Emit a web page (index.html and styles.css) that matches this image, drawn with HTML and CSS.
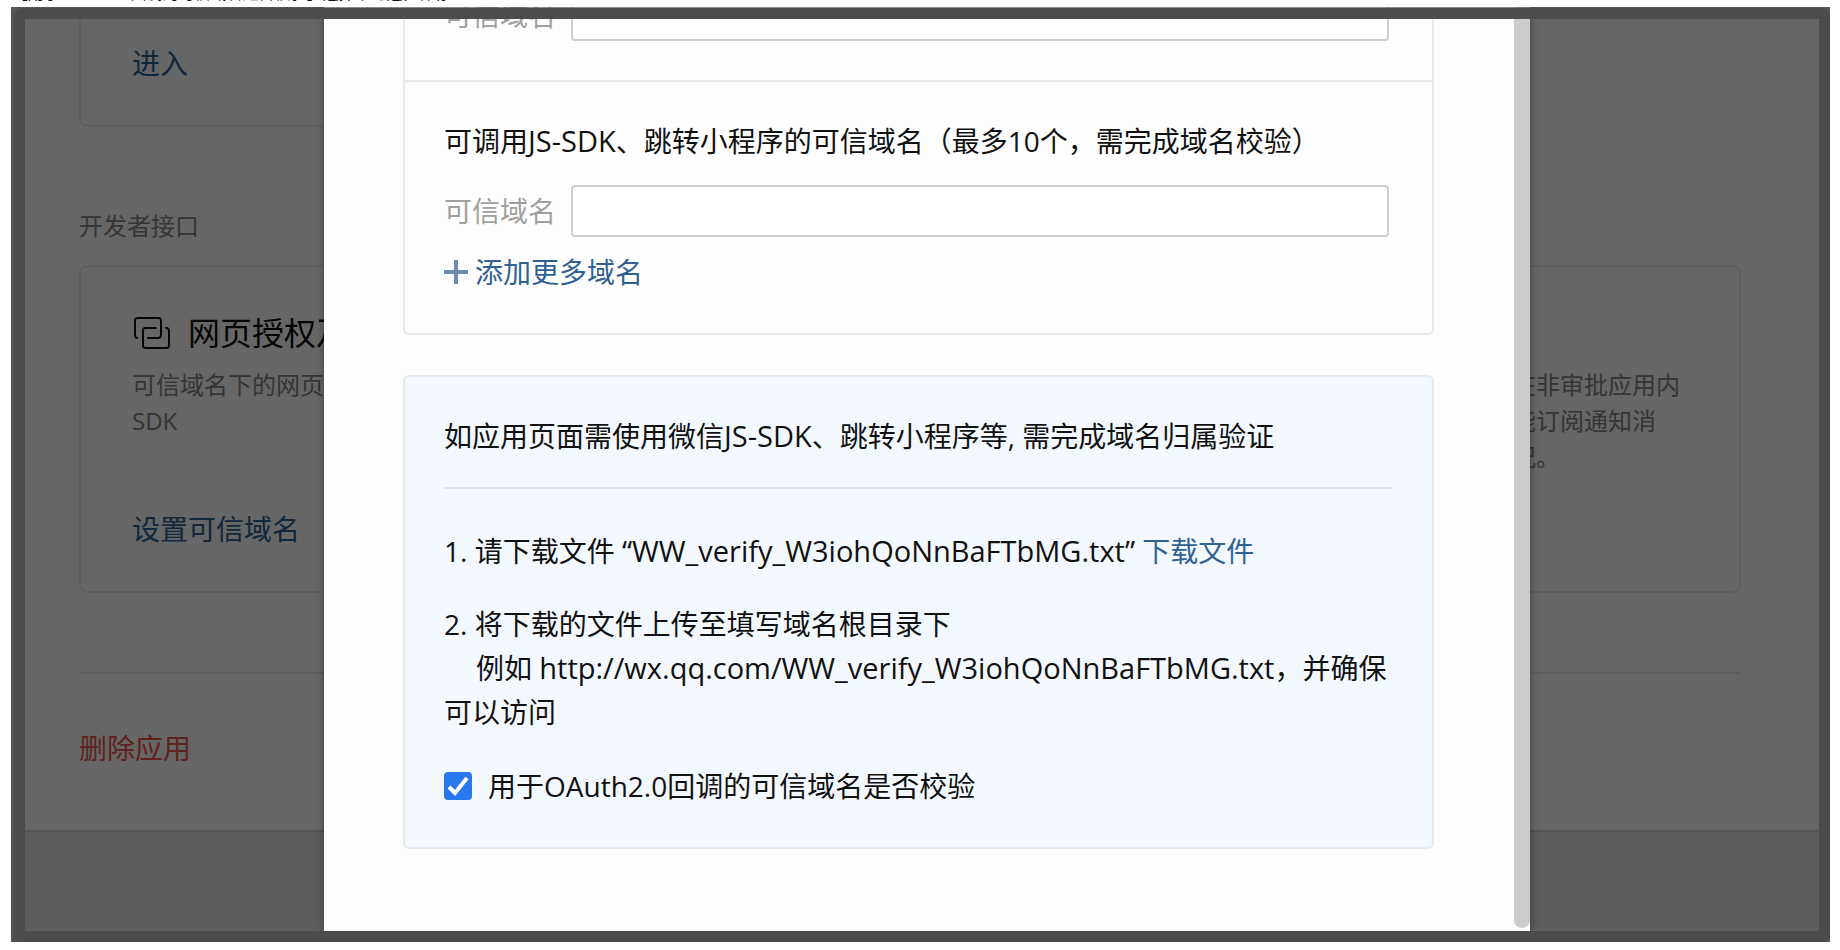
FILE: index.html
```
<!DOCTYPE html>
<html lang="zh-CN">
<head>
<meta charset="utf-8">
<title>可信域名</title>
<link rel="stylesheet" href="styles.css">
</head>
<body>
<p class="caption">【用于OAuth2.0回调的可信域名是否校验】选择不勾选，保存</p>
<div class="shot">
  <div class="page">
    <main class="page-main">
      <div class="cards">
        <section class="card card-enter"><a class="link" href="#">进入</a></section>
      </div>
      <h2 class="group-title">开发者接口</h2>
      <div class="cards">
        <section class="card">
          <h3 class="card-title">
            <svg class="card-icon" viewBox="0 0 40 34" fill="none" stroke="currentColor" stroke-width="2" stroke-linecap="round" stroke-linejoin="round"><path d="M5 22Q3 22 3 19V4Q3 2 6 2H27Q29 2 29 5V19Q29 22 26 22H16"/><path d="M24 12H13Q11 12 11 15V30Q11 32 14 32H35Q37 32 37 29V15Q37 12 34 12"/></svg>
            网页授权及JS-SDK
          </h3>
          <p class="card-desc">可信域名下的网页可使用JS-<br>SDK</p>
          <a class="link" href="#">设置可信域名</a>
        </section>
        <section class="card"></section>
        <section class="card">
          <h3 class="card-title">审批接口</h3>
          <p class="card-desc">调用审批接口后即可以在非审批应用内<br>使用企业微信审批的功能订阅通知消<br>息，及时了解审批的状况。</p>
        </section>
      </div>
      <hr class="page-rule">
      <button class="delete" type="button">删除应用</button>
    </main>
    <footer class="page-foot"></footer>
  </div>
  <div class="mask"></div>
  <div class="dialog" role="dialog" aria-label="可信域名">
    <div class="dialog-body">
      <div class="box">
        <section class="box-part part-first">
          <div class="field"><label for="d1">可信域名</label><input id="d1" type="text"></div>
        </section>
        <section class="box-part">
          <p class="text">可调用<span class="latin">JS-SDK</span>、跳转小程序的可信域名（最多10个，需完成域名校验）</p>
          <div class="field field-second"><label for="d2">可信域名</label><input id="d2" type="text"></div>
          <button class="add" type="button">
            <svg class="plus" viewBox="0 0 24 24" stroke="currentColor" stroke-width="4"><path d="M12 0V24M0 12H24"/></svg>添加更多域名
          </button>
        </section>
      </div>
      <section class="box box-blue">
        <p class="text">如应用页面需使用微信<span class="latin">JS-SDK</span>、跳转小程序等, 需完成域名归属验证</p>
        <hr class="box-rule">
        <p class="text">1. 请下载文件 <span class="latin">“WW_verify_W3iohQoNnBaFTbMG.txt”</span> <a class="link" href="#">下载文件</a></p>
        <p class="text step">2. 将下载的文件上传至填写域名根目录下<br><span class="indent">例如 <span class="latin">http://wx.qq.com/WW_verify_W3iohQoNnBaFTbMG.txt</span>，并确保</span>可以访问</p>
        <label class="check"><input type="checkbox" checked><svg class="tick" viewBox="0 0 28 28" fill="none" stroke="#fff" stroke-width="4"><path d="M5 15L11 21L23 6"/></svg>用于OAuth2.0回调的可信域名是否校验</label>
      </section>
    </div>
    <div class="scroll"></div>
  </div>
  <div class="frame"></div>
</div>
</body>
</html>
```
FILE: styles.css
```
* { box-sizing: border-box; }
body {
  margin: 0;
  height: 100vh;
  display: flex;
  flex-direction: column;
  background: #fff;
  color: #111;
  font: 28px/44px "Open Sans", "Noto Sans CJK SC", sans-serif;
  overflow: hidden;
}
h2, h3, p { margin: 0; font-weight: 400; }
button { padding: 0; border: 0; background: none; font: inherit; cursor: pointer; }
.link { color: #2f6193; text-decoration: none; }
.latin { font-size: 29px; line-height: 1; }

.caption {
  flex: none;
  height: 7px;
  padding: 0 0 4px 12px;
  overflow: hidden;
  display: flex;
  align-items: flex-end;
  font-size: 16px;
  line-height: 20px;
  white-space: nowrap;
}
.shot {
  flex: 1;
  min-height: 0;
  position: relative;
  margin: 0 10px 8px 11px;
  overflow: hidden;
}

.page {
  height: 100%;
  display: flex;
  flex-direction: column;
  justify-content: flex-end;
  background: #fff;
}
.page-main { flex: none; padding: 0 89px 64px 68px; line-height: 36px; }
.page-foot {
  flex: none;
  height: 112px;
  background: #e8e8e8;
  border-top: 2px solid #d2d2d2;
}
.card { border: 2px solid #e8e8e8; border-radius: 8px; padding: 44px 51px; }
.card-enter { padding-top: 80px; }
.card-enter .link { display: block; }
.group-title { margin: 81px 0 21px; font-size: 24px; color: #858585; }
.cards { display: grid; grid-template-columns: repeat(3, minmax(0, 1fr)); gap: 48px; }
.card-title {
  display: flex;
  align-items: center;
  gap: 16px;
  font-size: 32px;
  line-height: 44px;
  white-space: nowrap;
}
.card-icon { width: 40px; height: 34px; }
.card-desc {
  min-height: 108px;
  margin: 12px 0 36px;
  font-size: 24px;
  color: #858585;
  white-space: nowrap;
}
.page-rule { margin: 79px 0 56px; border: 0; border-top: 2px solid #e8e8e8; }
.delete { display: block; color: #f0554c; }

.mask { position: absolute; inset: 0; background: rgba(0, 0, 0, .6); }

.dialog {
  position: absolute;
  top: 0;
  bottom: 11px;
  left: 313px;
  right: 300px;
  display: flex;
  background: #fdfdfd;
  box-shadow: 0 0 8px rgba(0, 0, 0, .4);
}
.dialog-body {
  flex: 1;
  min-width: 0;
  display: flex;
  flex-direction: column;
  justify-content: flex-end;
  gap: 40px;
  padding: 0 80px 82px 79px;
  overflow: hidden;
}
.scroll { width: 16px; margin-bottom: 3px; background: #cbcbcb; border-radius: 0 0 8px 8px; }

.box { flex: none; border: 2px solid #e6eaed; border-radius: 6px; }
.box-part { padding: 37px 43px 39px 39px; }
.box-part + .box-part { border-top: 2px solid #e6eaed; }
.part-first { padding-bottom: 39px; }
.box-blue { padding: 37px 39px 39px; background: #f3f8fe; }
.box-blue .text { white-space: nowrap; }
.field { display: flex; align-items: center; gap: 15px; color: #a0a0a0; }
.field label { flex: none; }
.field input {
  flex: 1;
  min-width: 0;
  height: 52px;
  padding: 0 12px;
  border: 2px solid #cfcfcf;
  border-radius: 4px;
  background: #fff;
  font: inherit;
}
.field-second { margin: 22px 0 13px; }
.add { display: flex; align-items: center; gap: 7px; color: #2f6193; }
.plus { width: 24px; height: 24px; color: #6f8bad; }
.box-rule { margin: 29px 0 40px; border: 0; border-top: 2px solid #e1e6eb; }
.step { margin: 29px 0 30px; }
.indent { display: block; padding-left: 32px; }
.check { display: flex; align-items: center; position: relative; }
.check input {
  appearance: none;
  width: 28px;
  height: 28px;
  margin: 0 16px 0 0;
  border-radius: 4px;
  background: #2878f0;
}
.tick { position: absolute; left: 0; width: 28px; height: 28px; pointer-events: none; }
.check input:not(:checked) + .tick { display: none; }

.frame {
  position: absolute;
  inset: 1px 0 0 3px;
  border: 11px solid #4c4c4c;
  border-radius: 8px;
  box-shadow: 0 0 0 8px rgba(77, 77, 77, .65);
  pointer-events: none;
}
```
